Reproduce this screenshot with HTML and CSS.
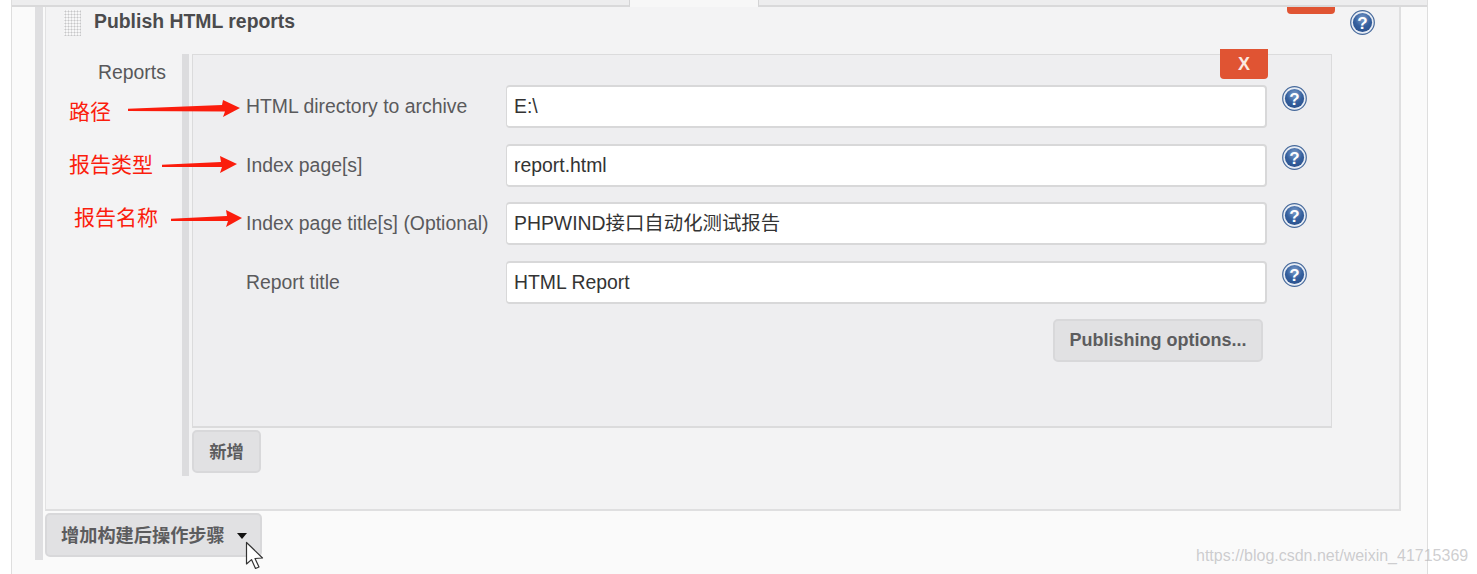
FILE: index.html
```html
<!DOCTYPE html>
<html lang="zh">
<head>
<meta charset="utf-8">
<title>Publish HTML reports</title>
<link rel="stylesheet" href="styles.css">
</head>
<body>
<svg width="0" height="0" class="defs">
  <defs>
    <radialGradient id="helpfill" cx="50%" cy="30%" r="75%">
      <stop offset="0" stop-color="#7f9fcc"/>
      <stop offset="0.55" stop-color="#35609e"/>
      <stop offset="1" stop-color="#284f8c"/>
    </radialGradient>
    <g id="help">
      <circle cx="12.5" cy="12.5" r="11.8" fill="#e8edf5" stroke="#46699b" stroke-width="1.2"/>
      <circle cx="12.5" cy="12.5" r="9.6" fill="url(#helpfill)"/>
      <text x="12.5" y="18.5" text-anchor="middle" class="help-q">?</text>
    </g>
  </defs>
</svg>
<div class="page">
  <div class="tabs">
    <div class="tab tab-first"></div>
    <div class="tab tab-active"></div>
    <div class="tab tab-rest"></div>
  </div>
  <div class="section">
    <div class="panel">
      <button class="del del-top" type="button"></button>
      <div class="head">
        <span class="grip"></span>
        <h2 class="title">Publish HTML reports</h2>
        <svg class="help help-head" viewBox="0 0 25 25"><use href="#help"/></svg>
      </div>
      <div class="reports">
        <div class="reports-label">Reports</div>
        <div class="reports-body">
          <div class="inner">
            <button class="del del-inner" type="button">X</button>
            <div class="row">
              <label class="field-label">HTML directory to archive</label>
              <div class="input">E:\</div>
              <svg class="help" viewBox="0 0 25 25"><use href="#help"/></svg>
            </div>
            <div class="row">
              <label class="field-label">Index page[s]</label>
              <div class="input">report.html</div>
              <svg class="help" viewBox="0 0 25 25"><use href="#help"/></svg>
            </div>
            <div class="row">
              <label class="field-label">Index page title[s] (Optional)</label>
              <div class="input">PHPWIND接口自动化测试报告</div>
              <svg class="help" viewBox="0 0 25 25"><use href="#help"/></svg>
            </div>
            <div class="row">
              <label class="field-label">Report title</label>
              <div class="input">HTML Report</div>
              <svg class="help" viewBox="0 0 25 25"><use href="#help"/></svg>
            </div>
            <div class="options">
              <button class="btn btn-options" type="button">Publishing options...</button>
            </div>
          </div>
          <button class="btn btn-add" type="button">新增</button>
        </div>
      </div>
    </div>
    <button class="btn btn-post" type="button">增加构建后操作步骤<span class="caret"></span></button>
  </div>

  <div class="note note-1">路径</div>
  <div class="note note-2">报告类型</div>
  <div class="note note-3">报告名称</div>
  <svg class="arrows" viewBox="0 0 260 240" width="260" height="240">
    <polygon points="128,108.7 222,105 223,100 240,108 223,117 225,111.5 128,111" fill="#fb1d0d"/>
    <polygon points="162,164.8 221,162 220,156 237,164 220,173 222,167 162,167" fill="#fb1d0d"/>
    <polygon points="171,218.8 227,216 226,210 242,218 226,227 228,221 171,221" fill="#fb1d0d"/>
  </svg>
  <svg class="cursor" viewBox="0 0 20 30" width="20" height="30">
    <path d="M1.5 1.5 L1.5 23 L6.5 18.6 L10.5 27.5 L14 26 L10 17.5 L17.5 17 Z" fill="#fff" stroke="#333" stroke-width="1.2" stroke-linejoin="round"/>
  </svg>
  <div class="watermark">https://blog.csdn.net/weixin_41715369</div>
</div>
</body>
</html>
```
FILE: styles.css
```css
* { box-sizing: border-box; }
html, body { margin: 0; padding: 0; background: #fff; }
body {
  width: 1477px;
  height: 574px;
  overflow: hidden;
  font-family: "Liberation Sans", "Noto Sans CJK SC", sans-serif;
  color: #555;
}
.defs { position: absolute; }
.page {
  position: relative;
  margin-left: 11px;
  width: 1417px;
  height: 574px;
  background: #fafafa;
  border-left: 1px solid #dedede;
  border-right: 1px solid #dedede;
  overflow: visible;
}
.tabs { display: flex; height: 7px; }
.tab { height: 7px; background: #ededee; border-bottom: 2px solid #d9d9da; }
.tab-first { width: 618px; border-right: 1px solid #d4d4d5; }
.tab-active { width: 128px; background: #f7f7f7; border-bottom: 0; }
.tab-rest { flex: 1; border-left: 1px solid #d4d4d5; }

.section {
  margin-left: 23px;
  width: 1366px;
  height: 553px;
  border-left: 8px solid #dfdfe1;
  padding-left: 2px;
}
.panel {
  position: relative;
  width: 1356px;
  height: 504px;
  background: #f3f3f4;
  border-left: 1px solid #e2e2e3;
  border-right: 2px solid #dfdfe0;
  border-bottom: 2px solid #dfdfe0;
}
.del {
  position: absolute;
  border: 0;
  background: #e05433;
  color: #fbe9e2;
  font: bold 18px "Liberation Sans", sans-serif;
  border-radius: 0 0 4px 4px;
  padding: 0;
}
.del-top { top: 0; right: 64px; width: 48px; height: 7px; }
.del-inner { top: -6px; right: 63px; width: 48px; height: 30px; }

.head { display: flex; height: 47px; padding-left: 18px; padding-top: 3px; }
.grip {
  width: 17px;
  height: 26px;
  background-color: #f7f7f8;
  background-image: radial-gradient(circle, #c6c6c8 0.9px, transparent 1.1px);
  background-size: 3px 3px;
}
.title {
  margin: 0 0 0 13px;
  font-size: 19.4px;
  line-height: 22px;
  font-weight: bold;
  color: #4b4b4d;
}
.help { width: 25px; height: 25px; flex: none; margin-left: 15px; margin-top: 1px; }
.help-head { position: absolute; left: 1304px; top: 3px; margin: 0; }
.help-q { font: bold 17px "Liberation Sans", sans-serif; fill: #fff; }

.reports { display: flex; }
.reports-label {
  width: 136px;
  padding-left: 52px;
  padding-top: 7px;
  font-size: 19.4px;
  line-height: 22px;
  color: #58585a;
}
.reports-body {
  width: 1150px;
  border-left: 7px solid #dcdcde;
  padding-left: 3px;
  height: 422px;
}
.inner {
  position: relative;
  width: 1140px;
  height: 374px;
  background: #eeeef0;
  border: 1px solid #dbdbdc;
  border-bottom-width: 2px;
  padding: 30px 0 0 53px;
}
.row { display: flex; align-items: flex-start; height: 58.6px; }
.field-label {
  width: 260px;
  padding-top: 10px;
  font-size: 19.4px;
  line-height: 22px;
  color: #5a5a5c;
  white-space: nowrap;
}
.input {
  width: 761px;
  height: 43px;
  background: #fff;
  border: 1px solid #d8d8d9;
  border-width: 2px 2px 2px 1px;
  border-radius: 4px;
  padding: 0 7px;
  font-size: 19.4px;
  line-height: 39px;
  color: #333;
}
.options { display: flex; justify-content: flex-end; width: 1017px; }
.btn {
  background: #e1e1e3;
  border: 2px solid #d8d8da;
  border-radius: 5px;
  font: bold 18px "Liberation Sans", "Noto Sans CJK SC", sans-serif;
  color: #5c5c5e;
  padding: 0;
}
.btn-options { width: 210px; height: 43px; padding-bottom: 1px; }
.btn-add { display: block; margin-top: 2px; width: 69px; height: 43px; font-size: 17.3px; padding-bottom: 3px; }
.btn-post {
  display: block;
  margin-top: 2px;
  width: 217px;
  height: 44px;
  text-align: left;
  padding-left: 14px;
  padding-bottom: 3px;
  font-size: 18.2px;
  position: relative;
  white-space: nowrap;
}
.caret {
  position: absolute;
  left: 190px;
  top: 18px;
  border-left: 5px solid transparent;
  border-right: 5px solid transparent;
  border-top: 6px solid #111;
}

.note {
  position: absolute;
  color: #fb1d0d;
  font-family: "Noto Sans CJK SC", sans-serif;
  font-size: 21px;
  line-height: 26px;
  white-space: nowrap;
}
.note-1 { left: 57px; top: 97px; }
.note-2 { left: 57px; top: 150px; }
.note-3 { left: 62px; top: 203px; }
.arrows { position: absolute; left: -12px; top: 0; }
.cursor { position: absolute; left: 233px; top: 541px; }
.watermark {
  position: absolute;
  left: 1184px;
  top: 546px;
  font-size: 16px;
  line-height: 20px;
  color: rgba(175, 175, 178, 0.62);
  white-space: nowrap;
}
```
